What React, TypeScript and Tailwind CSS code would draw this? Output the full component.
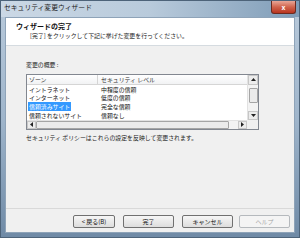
import React from "react";

const jp = "font-['Noto_Sans_CJK_JP','Noto_Sans_CJK_SC',sans-serif]";

const zones = [
  { zone: "イントラネット", level: "中程度の信頼" },
  { zone: "インターネット", level: "低度の信頼" },
  { zone: "信頼済みサイト", level: "完全な信頼", selected: true },
  { zone: "信頼されないサイト", level: "信頼なし" },
];

function Arrow({ dir }: { dir: "up" | "down" | "left" | "right" }) {
  const pts = {
    up: "1,4 3.5,1 6,4",
    down: "1,1 3.5,4 6,1",
    left: "4,1 1,3.5 4,6",
    right: "1,1 4,3.5 1,6",
  }[dir];
  const size = dir === "up" || dir === "down" ? { w: 7, h: 5 } : { w: 5, h: 7 };
  return (
    <svg width={size.w} height={size.h} viewBox={`0 0 ${size.w} ${size.h}`}>
      <polygon points={pts} fill="#222" />
    </svg>
  );
}

function Button({ label, disabled, className = "" }: { label: string; disabled?: boolean; className?: string }) {
  return (
    <div
      className={`h-[13px] flex items-center justify-center rounded-[2px] border text-[6px] leading-none ${
        disabled
          ? "border-[#b5b9bd] bg-[#f4f4f4] text-[#a6a6a6]"
          : "border-[#707070] bg-gradient-to-b from-[#f6f6f6] to-[#dddddd] text-[#111]"
      } ${className}`}
    >
      {label}
    </div>
  );
}

export default function App() {
  return (
    <div
      className={`w-[300px] h-[238px] flex flex-col bg-gradient-to-b from-[#b9cadb] via-[#9fb5cb] to-[#6f8aa6] border border-[#4d6379] ${jp}`}
    >
      {/* Title bar */}
      <div className="h-[16px] flex items-start justify-between bg-gradient-to-r from-[#cbd8e5] via-[#b8cadb] to-[#7f9cb7]">
        <span className="pl-[3px] pt-[3px] text-[6.8px] leading-none text-[#1a1a1a]">セキュリティ変更ウィザード</span>
        <div className="mr-[3px] w-[25px] h-[13px] flex items-center justify-center rounded-b-[3px] border border-t-0 border-[#6b2a20] bg-gradient-to-b from-[#e8a697] via-[#d0634c] to-[#b8331d]">
          <span className="text-[7px] leading-none font-bold text-white">x</span>
        </div>
      </div>

      {/* Client area */}
      <div className="flex-1 mx-[4px] mb-[4px] flex flex-col bg-[#f0f0f0] border border-[#8ea3b8]">
        {/* Header */}
        <div className="h-[28px] bg-white border-b border-[#d5dbe0] pl-[10px] pt-[5px]">
          <div className="text-[7px] leading-none font-bold text-[#111]">ウィザードの完了</div>
          <div className="pl-[14px] pt-[3px] text-[5.9px] leading-none text-[#222]">
            [完了] をクリックして下記に挙げた変更を行ってください。
          </div>
        </div>

        {/* Body */}
        <div className="flex-1 pl-[20px] pt-[16px]">
          <div className="text-[5.9px] leading-none text-[#222]">変更の概要 :</div>

          <div className="mt-[6px] w-[233px] h-[56px] border border-[#828790] bg-white grid grid-cols-[1fr_11px] grid-rows-[1fr_9px]">
            <div className="flex flex-col overflow-hidden">
              <div className="h-[11px] flex border-b border-[#d5d5d5] bg-gradient-to-b from-white to-[#f1f2f4] text-[5.9px] leading-none text-[#333]">
                <div className="w-[71px] flex items-center pl-[2px] border-r border-[#d5d5d5]">ゾーン</div>
                <div className="flex-1 flex items-center pl-[3px]">セキュリティ レベル</div>
              </div>
              {zones.map((z) => (
                <div key={z.zone} className="h-[9px] flex items-center text-[5.9px] leading-none text-[#111]">
                  <div className="w-[71px] pl-[1px]">
                    <span className={z.selected ? "bg-[#3399ff] text-white px-[1px]" : "px-[1px]"}>{z.zone}</span>
                  </div>
                  <div className="flex-1 pl-[3px]">{z.level}</div>
                </div>
              ))}
            </div>

            {/* Vertical scrollbar */}
            <div className="flex flex-col bg-[#f3f3f3] border-l border-[#e2e2e2]">
              <div className="h-[10px] flex items-center justify-center border border-[#c7c7c7] bg-[#ececec]">
                <Arrow dir="up" />
              </div>
              <div className="mt-[3px] h-[15px] mx-[0.5px] border border-[#a5a5a5] rounded-[1px] bg-[#ebebeb]" />
              <div className="flex-1" />
              <div className="h-[9px] flex items-center justify-center border border-[#c7c7c7] bg-[#ececec]">
                <Arrow dir="down" />
              </div>
            </div>

            {/* Horizontal scrollbar */}
            <div className="flex bg-[#f3f3f3] border-t border-[#e2e2e2]">
              <div className="w-[9px] flex items-center justify-center border border-[#c7c7c7] bg-[#ececec]">
                <Arrow dir="left" />
              </div>
              <div className="w-[193px] border border-[#a5a5a5] rounded-[1px] bg-[#ebebeb]" />
              <div className="flex-1" />
              <div className="w-[9px] flex items-center justify-center border border-[#c7c7c7] bg-[#ececec]">
                <Arrow dir="right" />
              </div>
            </div>
            <div className="bg-[#f0f0f0]" />
          </div>

          <div className="mt-[5px] text-[5.9px] leading-none text-[#222]">
            セキュリティ ポリシーはこれらの設定を反映して変更されます。
          </div>
        </div>

        {/* Footer */}
        <div className="border-t border-[#d9d9d9] h-[24px] flex items-start pt-[6px] pl-[67px]">
          <Button label="< 戻る(B)" className="w-[42px]" />
          <Button label="完了" className="ml-[8px] w-[51px]" />
          <Button label="キャンセル" className="ml-[8px] w-[51px]" />
          <Button label="ヘルプ" disabled className="ml-[6px] w-[51px]" />
        </div>
      </div>
    </div>
  );
}
